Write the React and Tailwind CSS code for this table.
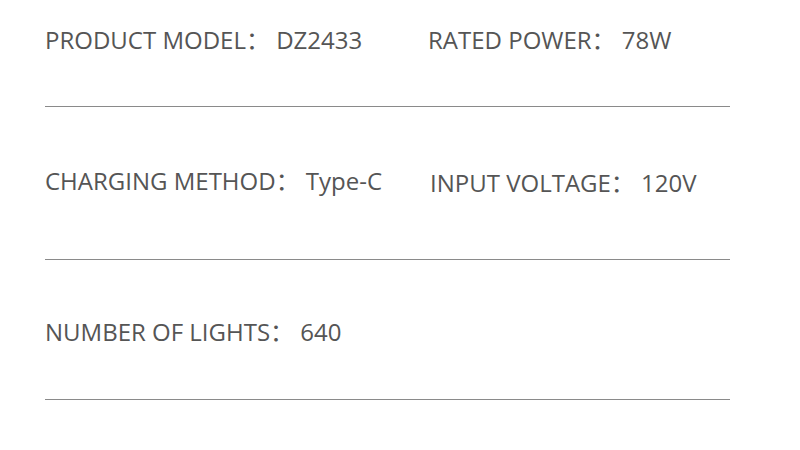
const rows = [
  {
    items: [
      { label: "PRODUCT MODEL", value: "DZ2433" },
      { label: "RATED POWER", value: "78W" },
    ],
    top: "mt-[28px]",
    gap: "mt-[54px]",
  },
  {
    items: [
      { label: "CHARGING METHOD", value: "Type-C" },
      { label: "INPUT VOLTAGE", value: "120V", nudge: "ml-[2px] mt-[2px]" },
    ],
    top: "mt-[62px]",
    gap: "mt-[64px]",
  },
  {
    items: [{ label: "NUMBER OF LIGHTS", value: "640" }],
    top: "mt-[60px]",
    gap: "mt-[55px]",
  },
];

const SpecRow = ({ row }) => (
  <div>
    <div className={`flex items-start ${row.top} text-[24px] leading-[24px] text-[#555555]`}>
      {row.items.map((item, i) => (
        <div
          key={item.label}
          className={`whitespace-pre ${i === 0 ? "w-[383px] shrink-0" : ""} ${item.nudge || ""}`}
        >
          {item.label}：{" "}{item.value}
        </div>
      ))}
    </div>
    <div className={`${row.gap} h-px bg-[#8a8a8a]`} />
  </div>
);

export default function App() {
  return (
    <div
      className="w-[800px] h-[450px] bg-white overflow-hidden flow-root"
      style={{ fontFamily: '"Open Sans", "Noto Sans CJK SC", sans-serif' }}
    >
      <div className="ml-[45px] w-[685px]">
        {rows.map((row, i) => (
          <SpecRow key={i} row={row} />
        ))}
      </div>
    </div>
  );
}
